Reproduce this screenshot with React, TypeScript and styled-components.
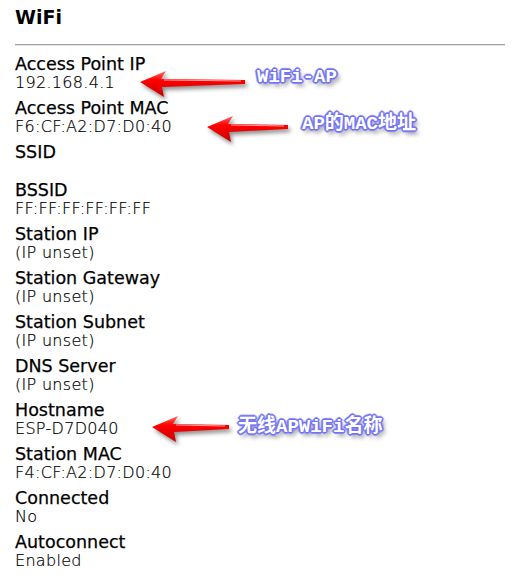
import React from 'react';
import styled, { createGlobalStyle } from 'styled-components';

const GlobalStyle = createGlobalStyle`
  html, body {
    margin: 0;
    padding: 0;
    background: #ffffff;
  }
  body {
    font-family: "DejaVu Sans", Verdana, sans-serif;
    color: #000000;
  }
`;

const Page = styled.div`
  position: relative;
  width: 525px;
  height: 581px;
  overflow: hidden;
  padding: 0 20px 0 15px;
  box-sizing: border-box;
`;

const Title = styled.h1`
  margin: 0;
  padding-top: 7px;
  font-size: 19px;
  line-height: 20px;
  font-weight: bold;
`;

const Divider = styled.hr`
  margin: 17px 0 0;
  border: 0;
  height: 1px;
  background: #a0a0a0;
  box-shadow: 0 1px 0 #e4e4e4;
`;

const InfoList = styled.dl`
  margin: 9px 0 0;
`;

const Item = styled.div`
  margin-bottom: 6px;
`;

const Label = styled.dt`
  font-size: 17.5px;
  line-height: 20px;
  -webkit-text-stroke: 0.25px #000;
`;

const Value = styled.dd<{ $empty?: boolean }>`
  margin: 0;
  font-size: 16px;
  font-weight: 200;
  letter-spacing: 0.3px;
  line-height: 18px;
  color: #000;
  -webkit-text-stroke: 0.2px #000;
  height: ${({ $empty }) => ($empty ? '12px' : '18px')};
`;

const Overlay = styled.div<{ $x: number; $y: number }>`
  position: absolute;
  left: ${({ $x }) => $x}px;
  top: ${({ $y }) => $y}px;
`;

const ArrowSvg = styled.svg`
  display: block;
  overflow: visible;
  filter: drop-shadow(2px 3px 2px rgba(0, 0, 0, 0.45));
`;

const Note = styled.span`
  display: block;
  font-family: "Liberation Mono", "Noto Sans CJK SC", monospace;
  font-weight: bold;
  font-size: 19px;
  line-height: 22px;
  white-space: nowrap;
  color: #ffffff;
  text-shadow:
    1px 0 0 #7474f2, -1px 0 0 #7474f2, 0 1px 0 #7474f2, 0 -1px 0 #7474f2,
    1px 1px 0 #7474f2, -1px -1px 0 #7474f2, 1px -1px 0 #7474f2, -1px 1px 0 #7474f2,
    2px 0 1px #8080f6, -2px 0 1px #8080f6, 0 2px 1px #8080f6, 0 -2px 1px #8080f6,
    3px 4px 4px rgba(0, 0, 0, 0.45);
`;

const Arrow: React.FC<{ length: number; id: string }> = ({ length, id }) => {
  const w = length;
  return (
    <ArrowSvg width={w} height={30} viewBox={`0 0 ${w} 30`}>
      <defs>
        <linearGradient id={id} x1="0" y1="0" x2="0" y2="1">
          <stop offset="0" stopColor="#ff6a6a" />
          <stop offset="0.35" stopColor="#ff0000" />
          <stop offset="1" stopColor="#c80000" />
        </linearGradient>
      </defs>
      <polygon
        points={`1,11 27,0 22,8 ${w},9 ${w},13 23,16 25,26`}
        fill={`url(#${id})`}
      />
      <polyline
        points={`25,9 ${w - 4},10`}
        stroke="#ffc8c8"
        strokeWidth="1"
        fill="none"
        opacity="0.8"
      />
    </ArrowSvg>
  );
};

type Row = { label: string; value: string };

const rows: Row[] = [
  { label: 'Access Point IP', value: '192.168.4.1' },
  { label: 'Access Point MAC', value: 'F6:CF:A2:D7:D0:40' },
  { label: 'SSID', value: '' },
  { label: 'BSSID', value: 'FF:FF:FF:FF:FF:FF' },
  { label: 'Station IP', value: '(IP unset)' },
  { label: 'Station Gateway', value: '(IP unset)' },
  { label: 'Station Subnet', value: '(IP unset)' },
  { label: 'DNS Server', value: '(IP unset)' },
  { label: 'Hostname', value: 'ESP-D7D040' },
  { label: 'Station MAC', value: 'F4:CF:A2:D7:D0:40' },
  { label: 'Connected', value: 'No' },
  { label: 'Autoconnect', value: 'Enabled' },
];

// callouts drawn over the screenshot: arrow + note text
const callouts = [
  { id: 'a', arrow: { x: 139, y: 71, len: 106 }, note: { x: 257, y: 66, text: 'WiFi-AP' } },
  { id: 'b', arrow: { x: 206, y: 116, len: 82 }, note: { x: 302, y: 113, text: 'AP的MAC地址' } },
  { id: 'c', arrow: { x: 151, y: 416, len: 78 }, note: { x: 238, y: 416, text: '无线APWiFi名称' } },
];

const App: React.FC = () => {
  return (
    <>
      <GlobalStyle />
      <Page>
        <Title>WiFi</Title>
        <Divider />
        <InfoList>
          {rows.map((row) => (
            <Item key={row.label}>
              <Label>{row.label}</Label>
              <Value $empty={!row.value}>{row.value}</Value>
            </Item>
          ))}
        </InfoList>

        {callouts.map((c) => (
          <React.Fragment key={c.id}>
            <Overlay $x={c.arrow.x} $y={c.arrow.y}>
              <Arrow length={c.arrow.len} id={`arrow-${c.id}`} />
            </Overlay>
            <Overlay $x={c.note.x} $y={c.note.y}>
              <Note>{c.note.text}</Note>
            </Overlay>
          </React.Fragment>
        ))}
      </Page>
    </>
  );
};

export default App;
